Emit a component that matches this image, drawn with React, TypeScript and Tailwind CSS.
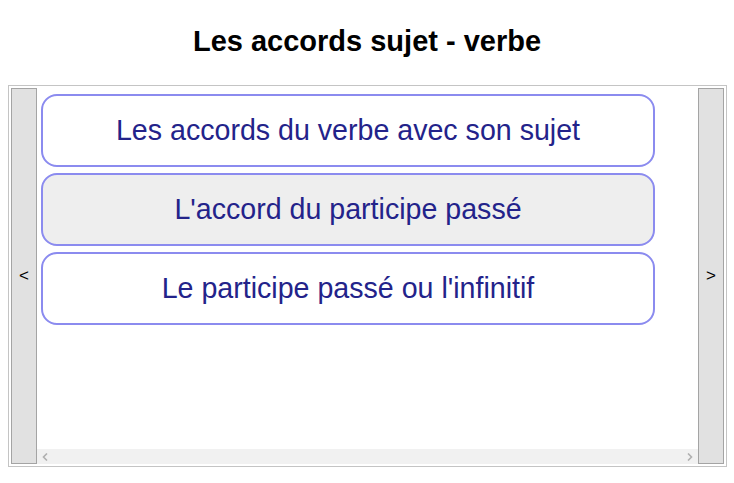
import React from "react";

const items = [
  { label: "Les accords du verbe avec son sujet", active: false },
  { label: "L'accord du participe passé", active: true },
  { label: "Le participe passé ou l'infinitif", active: false },
];

export default function App() {
  return (
    <div
      className="w-[734px] h-[483px] bg-white overflow-hidden"
      style={{ fontFamily: '"Liberation Sans", Arial, sans-serif' }}
    >
      <h1 className="pt-[25px] h-[85px] text-center text-[29px] leading-[33px] font-bold text-black">
        Les accords sujet - verbe
      </h1>
      <div className="ml-[8px] w-[719px] h-[382px] border border-[#c4c4c4] p-[2px] flex">
        <div className="w-[26px] shrink-0 border border-[#a4a4a4] bg-[#e1e1e1] flex items-center justify-center text-[17px] text-black">
          &lt;
        </div>
        <div className="flex-1 flex flex-col min-w-0">
          <div className="flex-1 flex flex-col gap-[6px] pl-[4px] pt-[6px]">
            {items.map((it) => (
              <div
                key={it.label}
                className={`w-[614px] h-[73px] shrink-0 border-2 border-[#8b8bef] rounded-[16px] flex items-center justify-center text-[28.6px] text-[#23238a] ${
                  it.active ? "bg-[#eeeeee]" : "bg-white"
                }`}
              >
                {it.label}
              </div>
            ))}
          </div>
          <div className="h-[15px] shrink-0 bg-[#f1f1f1] flex items-center justify-between px-[5px]">
            <svg width="6" height="8" viewBox="0 0 6 8">
              <path d="M5 0.5 L1.5 4 L5 7.5" fill="none" stroke="#b0b0b0" strokeWidth="1.6" />
            </svg>
            <svg width="6" height="8" viewBox="0 0 6 8">
              <path d="M1 0.5 L4.5 4 L1 7.5" fill="none" stroke="#b0b0b0" strokeWidth="1.6" />
            </svg>
          </div>
        </div>
        <div className="w-[26px] shrink-0 border border-[#a4a4a4] bg-[#e1e1e1] flex items-center justify-center text-[17px] text-black">
          &gt;
        </div>
      </div>
    </div>
  );
}
